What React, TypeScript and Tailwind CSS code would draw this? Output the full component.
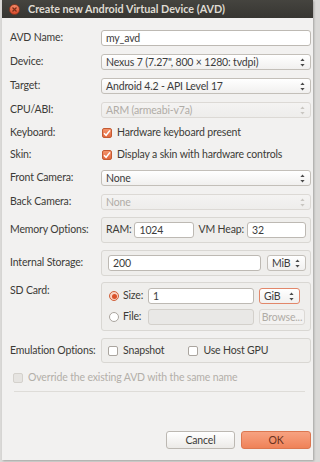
import type { ReactNode } from 'react'

// Taille de texte commune (police proche de Ubuntu)
const TXT = 'text-[10.5px] tracking-[-0.15px]'

// Petite flèche haut/bas des listes déroulantes
function Arrows({ disabled }: { disabled?: boolean }) {
  const c = disabled ? '#c9c6c1' : '#4a4a4a'
  return (
    <svg width="5" height="9" viewBox="0 0 5 9">
      <path d="M2.5 0.5 L4.6 3 L0.4 3 Z" fill={c} />
      <path d="M2.5 8.5 L4.6 6 L0.4 6 Z" fill={c} />
    </svg>
  )
}

function TextInput({ value, className = '', disabled }: { value?: string; className?: string; disabled?: boolean }) {
  return (
    <div
      className={`h-[16px] flex items-center px-[4px] rounded-[3px] border ${
        disabled ? 'bg-[#e9e8e6] border-[#d3d0cb]' : 'bg-white border-[#bdb9b3]'
      } ${className}`}
    >
      <span className={`${TXT} leading-none text-[#3c3c3c] whitespace-nowrap`}>{value}</span>
    </div>
  )
}

function Select({
  value,
  disabled,
  className = '',
  focus,
}: {
  value: string
  disabled?: boolean
  className?: string
  focus?: boolean
}) {
  return (
    <div
      className={`h-[16px] flex items-center justify-between pl-[4px] pr-[5px] rounded-[3px] border bg-gradient-to-b ${
        disabled
          ? 'from-[#f4f3f2] to-[#eeedeb] border-[#dcd9d5]'
          : focus
          ? 'from-white to-[#f1f0ef] border-[#e2876a]'
          : 'from-white to-[#f1f0ef] border-[#c3bfb9]'
      } ${className}`}
    >
      <span className={`${TXT} leading-none whitespace-nowrap ${disabled ? 'text-[#b0aca6]' : 'text-[#3c3c3c]'}`}>
        {value}
      </span>
      <Arrows disabled={disabled} />
    </div>
  )
}

function Check({ checked, disabled }: { checked?: boolean; disabled?: boolean }) {
  if (checked) {
    return (
      <div className="w-[10px] h-[10px] rounded-[2px] border border-[#c45a32] bg-gradient-to-b from-[#f3936b] to-[#e2683d] flex items-center justify-center">
        <svg width="8" height="8" viewBox="0 0 8 8">
          <path d="M1 4.2 L3.1 6.3 L7 1.4" fill="none" stroke="#fff" strokeWidth="1.5" />
        </svg>
      </div>
    )
  }
  return (
    <div
      className={`w-[10px] h-[10px] rounded-[2px] border ${
        disabled ? 'border-[#d4d1cc] bg-[#e6e4e1]' : 'border-[#aaa59f] bg-white'
      }`}
    />
  )
}

function Radio({ checked }: { checked?: boolean }) {
  if (checked) {
    return (
      <div className="w-[10px] h-[10px] rounded-full border border-[#d0603a] bg-[#f9d2c2] flex items-center justify-center">
        <div className="w-[5px] h-[5px] rounded-full bg-[#d9512a]" />
      </div>
    )
  }
  return <div className="w-[10px] h-[10px] rounded-full border border-[#aaa59f] bg-white" />
}

function Label({ children, className = '' }: { children: ReactNode; className?: string }) {
  return <div className={`w-[91px] shrink-0 ${TXT} text-[#3c3b37] whitespace-nowrap ${className}`}>{children}</div>
}

function Row({ label, children, h = 'h-[24px]' }: { label: string; children: ReactNode; h?: string }) {
  return (
    <div className={`flex items-center ${h}`}>
      <Label>{label}</Label>
      <div className="flex-1">{children}</div>
    </div>
  )
}

function Group({ className = '', children }: { className?: string; children: ReactNode }) {
  return (
    <div className={`flex-1 min-w-0 rounded-[3px] border border-[#d9d7d3] bg-[#efeeec] ${className}`}>{children}</div>
  )
}

export default function App() {
  return (
    <div
      className="w-[320px] h-[462px] bg-[#dad9d7] overflow-hidden"
      style={{ fontFamily: 'Lato, "Noto Sans", sans-serif' }}
    >
      <div className="ml-[2px] w-[311px] h-[460px] bg-[#f2f1f0] flex flex-col shadow-[1px_1px_2px_rgba(0,0,0,0.25)]">
        {/* Barre de titre */}
        <div className="h-[18px] bg-gradient-to-b from-[#45443f] to-[#373632] flex items-center pl-[7px]">
          <div className="w-[11px] h-[11px] rounded-full bg-gradient-to-b from-[#f58a68] to-[#d9482a] border border-[#8e3a22] flex items-center justify-center">
            <svg width="5" height="5" viewBox="0 0 5 5">
              <path d="M0.5 0.5 L4.5 4.5 M4.5 0.5 L0.5 4.5" stroke="#7a2f1a" strokeWidth="1.2" />
            </svg>
          </div>
          <span className="ml-[8px] text-[10.8px] font-bold text-[#dfdbd2] whitespace-nowrap">
            Create new Android Virtual Device (AVD)
          </span>
        </div>

        {/* Contenu */}
        <div className="flex flex-col pl-[8px] pr-[2px] pt-[8px] flex-1">
          <Row label="AVD Name:">
            <TextInput value="my_avd" />
          </Row>
          <Row label="Device:">
            <Select value={'Nexus 7 (7.27", 800 × 1280: tvdpi)'} />
          </Row>
          <Row label="Target:">
            <Select value="Android 4.2 - API Level 17" />
          </Row>
          <Row label="CPU/ABI:">
            <Select value="ARM (armeabi-v7a)" disabled />
          </Row>
          <Row label="Keyboard:" h="h-[22px]">
            <div className="flex items-center gap-[5px] pl-[1px]">
              <Check checked />
              <span className={`${TXT} text-[#3c3b37]`}>Hardware keyboard present</span>
            </div>
          </Row>
          <Row label="Skin:" h="h-[22px]">
            <div className="flex items-center gap-[5px] pl-[1px]">
              <Check checked />
              <span className={`${TXT} text-[#3c3b37]`}>Display a skin with hardware controls</span>
            </div>
          </Row>
          <Row label="Front Camera:">
            <Select value="None" />
          </Row>
          <Row label="Back Camera:">
            <Select value="None" disabled />
          </Row>

          <div className="flex items-center mt-[3px]">
            <Label>Memory Options:</Label>
            <Group className="h-[26px] flex items-center pl-[4px] pr-[4px]">
              <span className={`${TXT} text-[#3c3b37]`}>RAM:</span>
              <TextInput value="1024" className="ml-[3px] w-[60px]" />
              <span className={`ml-[4px] ${TXT} text-[#3c3b37] whitespace-nowrap`}>VM Heap:</span>
              <TextInput value="32" className="ml-[3px] flex-1" />
            </Group>
          </div>

          <div className="flex items-center mt-[7px]">
            <Label>Internal Storage:</Label>
            <Group className="h-[26px] flex items-center pl-[6px] pr-[4px]">
              <TextInput value="200" className="w-[153px]" />
              <Select value="MiB" className="ml-[6px] flex-1" />
            </Group>
          </div>

          <div className="flex items-start mt-[6px]">
            <Label className="pt-[1px]">SD Card:</Label>
            <Group className="h-[49px] flex flex-col justify-center gap-[5px] pl-[7px] pr-[5px]">
              <div className="flex items-center">
                <Radio checked />
                <span className={`ml-[4px] w-[25px] ${TXT} text-[#3c3b37]`}>Size:</span>
                <TextInput value="1" className="w-[106px]" />
                <Select value="GiB" focus className="ml-[5px] w-[41px]" />
              </div>
              <div className="flex items-center">
                <Radio />
                <span className={`ml-[4px] w-[25px] ${TXT} text-[#3c3b37]`}>File:</span>
                <TextInput disabled className="w-[106px]" />
                <div className="ml-[5px] flex-1 h-[16px] rounded-[3px] border border-[#dcd9d5] bg-[#f3f2f1] flex items-center justify-center">
                  <span className={`${TXT} leading-none text-[#b0aca6]`}>Browse...</span>
                </div>
              </div>
            </Group>
          </div>

          <div className="flex items-center mt-[7px]">
            <Label>Emulation Options:</Label>
            <Group className="h-[25px] flex items-center pl-[6px]">
              <Check />
              <span className={`ml-[5px] ${TXT} text-[#3c3b37]`}>Snapshot</span>
              <div className="ml-[24px]">
                <Check />
              </div>
              <span className={`ml-[5px] ${TXT} text-[#3c3b37] whitespace-nowrap`}>Use Host GPU</span>
            </Group>
          </div>

          <div className="flex items-center mt-[8px] h-[14px] pl-[3px] gap-[5px]">
            <Check disabled />
            <span className={`${TXT} text-[#b3afa9] whitespace-nowrap`}>Override the existing AVD with the same name</span>
          </div>

          <div className="mt-[6px] ml-[4px] mr-[6px] h-[1px] bg-[#dedcd8]" />

          <div className="flex justify-end gap-[6px] mt-[39px]">
            <div className="w-[69px] h-[18px] rounded-[3px] border border-[#bcb8b2] bg-gradient-to-b from-white to-[#eceae7] flex items-center justify-center">
              <span className={`${TXT} leading-none text-[#3c3b37]`}>Cancel</span>
            </div>
            <div className="w-[70px] h-[18px] rounded-[3px] border border-[#dc7750] bg-gradient-to-b from-[#f7a281] to-[#ef8258] flex items-center justify-center">
              <span className={`${TXT} leading-none text-[#6b3220]`}>OK</span>
            </div>
          </div>
        </div>
      </div>
    </div>
  )
}
